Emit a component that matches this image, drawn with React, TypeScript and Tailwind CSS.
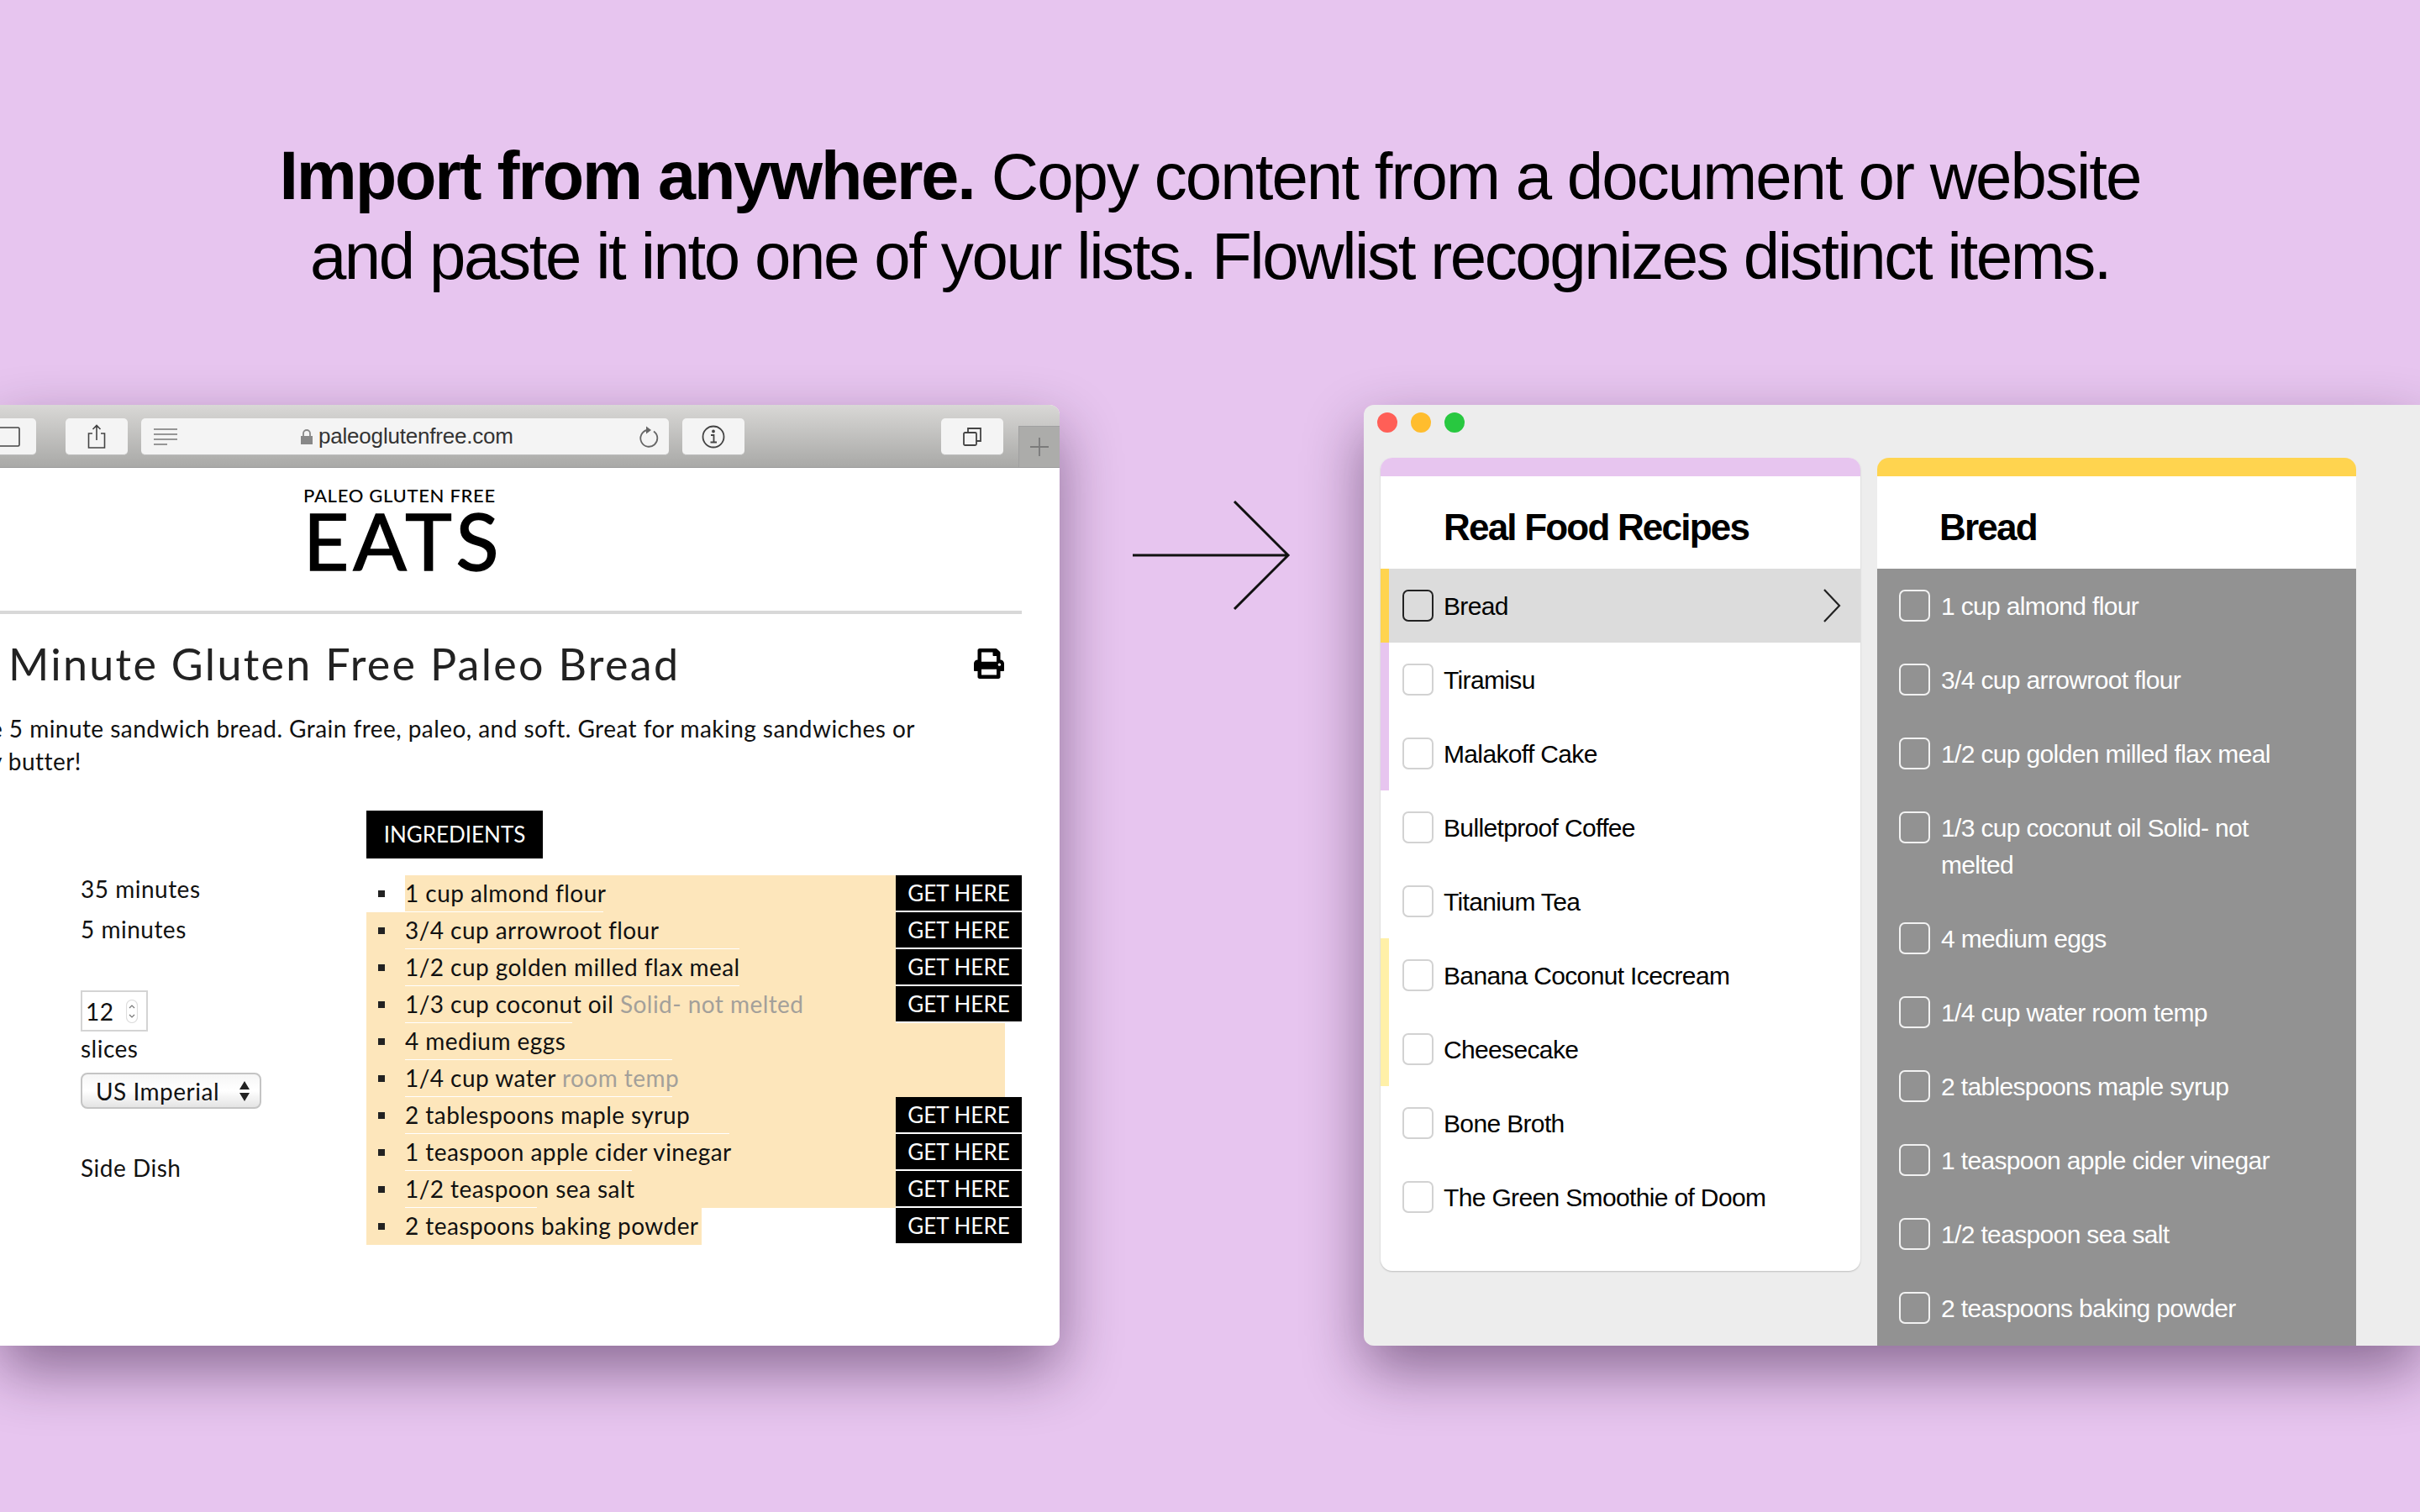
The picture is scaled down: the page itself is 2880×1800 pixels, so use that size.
import { FaPrint } from "react-icons/fa";

const ingredients = [
  { text: "1 cup almond flour", fill: "w-[630px]", line: "w-[236px]", buy: true, skipBullet: true },
  { text: "3/4 cup arrowroot flour", fill: "w-[630px]", line: "w-[398px]", buy: true },
  { text: "1/2 cup golden milled flax meal", fill: "w-[630px]", line: "w-[398px]", buy: true },
  { text: "1/3 cup coconut oil", note: "Solid- not melted", fill: "w-[630px]", line: "w-[199px]", buy: true },
  { text: "4 medium eggs", fill: "w-[760px]", line: "w-[318px]", buy: false },
  { text: "1/4 cup water", note: "room temp", fill: "w-[760px]", line: "w-[318px]", buy: false },
  { text: "2 tablespoons maple syrup", fill: "w-[630px]", line: "w-[386px]", buy: true },
  { text: "1 teaspoon apple cider vinegar", fill: "w-[630px]", line: "w-[270px]", buy: true },
  { text: "1/2 teaspoon sea salt", fill: "w-[630px]", line: "w-[157px]", buy: true },
  { text: "2 teaspoons baking powder", fill: "w-[399px]", line: "w-0", buy: true },
];

const recipes = [
  { name: "Bread", stripe: "bg-[#ffd44f]", active: true },
  { name: "Tiramisu", stripe: "bg-[#e7c5ef]" },
  { name: "Malakoff Cake", stripe: "bg-[#e7c5ef]" },
  { name: "Bulletproof Coffee", stripe: "bg-white" },
  { name: "Titanium Tea", stripe: "bg-white" },
  { name: "Banana Coconut Icecream", stripe: "bg-[#fff0a8]" },
  { name: "Cheesecake", stripe: "bg-[#fff0a8]" },
  { name: "Bone Broth", stripe: "bg-white" },
  { name: "The Green Smoothie of Doom", stripe: "bg-white" },
];

const breadItems = [
  "1 cup almond flour",
  "3/4 cup arrowroot flour",
  "1/2 cup golden milled flax meal",
  "1/3 cup coconut oil Solid- not melted",
  "4 medium eggs",
  "1/4 cup water room temp",
  "2 tablespoons maple syrup",
  "1 teaspoon apple cider vinegar",
  "1/2 teaspoon sea salt",
  "2 teaspoons baking powder",
];

function ToolButton({ className, children }: { className: string; children?: React.ReactNode }) {
  return (
    <div className={`h-[44px] shrink-0 rounded-[5px] bg-[#f4f4f4] border-b border-[#bdbdbd] flex items-center justify-center ${className}`}>
      {children}
    </div>
  );
}

function BrowserWindow() {
  return (
    <div className="w-[1261px] h-[1120px] shrink-0 rounded-r-[12px] bg-white overflow-hidden flex flex-col shadow-[0_30px_70px_rgba(40,10,50,0.48)] font-['Lato',sans-serif] text-[#111]">
      {/* Safari toolbar */}
      <div className="h-[75px] shrink-0 bg-gradient-to-b from-[#d9d8d6] to-[#a9a9a7] border-b border-[#999] flex items-start pt-[16px] relative">
        <ToolButton className="w-[80px] -ml-[37px]">
          <svg width="80" height="26" viewBox="0 0 80 26" fill="none" stroke="#444" strokeWidth="1.6">
            <rect x="20" y="2" width="40" height="22" rx="1.5" />
            <path d="M36 2v22" />
          </svg>
        </ToolButton>
        <ToolButton className="w-[74px] ml-[35px]">
          <svg width="24" height="30" viewBox="0 0 24 30" fill="none" stroke="#444" strokeWidth="1.6">
            <path d="M7 11H2.500v17h19V11H17M12 19V1.500M7.500 6 12 1.500 16.500 6" />
          </svg>
        </ToolButton>
        <ToolButton className="w-[628px] ml-[16px]">
          <div className="w-full flex items-center pl-[14px] pr-[12px]">
            <svg width="30" height="22" viewBox="0 0 30 22" stroke="#777" strokeWidth="1.6" className="shrink-0">
              <path d="M1 2h28M1 8h28M1 14h28M1 20h16" />
            </svg>
            <svg width="16" height="20" viewBox="0 0 16 20" fill="#888" className="shrink-0 ml-[145px]">
              <path d="M1 9h14v10H1z" />
              <path d="M4 9V6a4 4 0 0 1 8 0v3" fill="none" stroke="#888" strokeWidth="1.800" />
            </svg>
            <div className="ml-[6px] flex-1 text-[#333] text-[26px] font-['Liberation_Sans',sans-serif] tracking-[-0.2px]">paleoglutenfree.com</div>
            <svg width="24" height="26" viewBox="0 0 24 26" fill="none" stroke="#666" strokeWidth="1.800" className="shrink-0">
              <path d="M18 6.500a10 10 0 1 1-8-1.500" />
              <path d="M9 0.500l6 4.500-6 4.500z" fill="#666" stroke="none" />
            </svg>
          </div>
        </ToolButton>
        <ToolButton className="w-[74px] ml-[16px]">
          <svg width="30" height="30" viewBox="0 0 30 30" fill="none" stroke="#444" strokeWidth="1.800">
            <circle cx="15" cy="15" r="12.500" />
            <path d="M12 13h3.500v8M11.500 21.500h7.500" />
            <circle cx="15" cy="8.500" r="1" fill="#444" />
          </svg>
        </ToolButton>
        <ToolButton className="w-[74px] ml-[234px]">
          <svg width="26" height="26" viewBox="0 0 26 26" fill="none" stroke="#444" strokeWidth="1.800">
            <rect x="3" y="8" width="15" height="15" rx="1.500" />
            <path d="M8 8V3h15v15h-5" />
          </svg>
        </ToolButton>
        <div className="absolute right-0 bottom-0 w-[49px] h-[49px] bg-[#acacaa] border-l border-t border-[#a0a0a0] flex items-center justify-center">
          <svg width="24" height="24" viewBox="0 0 24 24" stroke="#7a7a7a" strokeWidth="1.800">
            <path d="M12 1v22M1 12h22" />
          </svg>
        </div>
      </div>

      {/* Recipe page */}
      <div className="flex-1 min-h-0">
        <div className="pl-[361px] pt-[21px]">
          <div className="h-[24px] leading-[24px] text-[22px] font-medium text-black tracking-[0.7px] whitespace-nowrap">PALEO GLUTEN FREE</div>
          <div className="h-[66px] leading-[66px] mt-[8px] text-[94px] font-normal text-black tracking-[5px] [-webkit-text-stroke:1.5px_black]">EATS</div>
        </div>
        <div className="w-[1216px] h-[4px] mt-[51px] bg-[#d8d8d8]" />
        <div className="w-[1216px] h-[60px] mt-[29px] flex items-center justify-between pl-[10px] pr-[20px]">
          <div className="text-[52px] leading-[60px] tracking-[2.3px] text-[#222] whitespace-nowrap">Minute Gluten Free Paleo Bread</div>
          <FaPrint className="w-[38px] h-[36px] text-black" />
        </div>
        <div className="mt-[28px] -ml-[12px] text-[28px] leading-[39px] tracking-[0.45px] whitespace-nowrap">
          <div>e 5 minute sandwich bread. Grain free, paleo, and soft. Great for making sandwiches or</div>
          <div>y butter!</div>
        </div>
        <div className="ml-[436px] mt-[39px] w-[210px] h-[57px] bg-black text-white text-[26px] flex items-center justify-center">INGREDIENTS</div>
        <div className="mt-[20px] flex">
          <div className="w-[436px] pl-[96px] text-[28px] tracking-[0.5px] leading-[32px] shrink-0">
            <div>35 minutes</div>
            <div className="mt-4">5 minutes</div>
            <div className="mt-[57px] w-[80px] h-[49px] border-2 border-[#d4d4d4] flex items-center justify-between pl-[4px] pr-[10px]">
              12
              <svg width="14" height="28" viewBox="0 0 14 28" fill="none" stroke="#777" strokeWidth="1.200">
                <rect x="0.500" y="0.500" width="13" height="27" rx="6.500" stroke="#ddd" />
                <path d="M4 10l3-3 3 3M4 18l3 3 3-3" />
              </svg>
            </div>
            <div className="mt-1">slices</div>
            <div className="mt-[13px] w-[215px] h-[43px] rounded-[8px] border-2 border-[#c4c4c4] bg-gradient-to-b from-[#f6f6f6] via-white to-[#e4e4e4] flex items-center justify-between pl-[16px] pr-[11px]">
              US Imperial
              <svg width="14" height="26" viewBox="0 0 14 26" fill="#222">
                <path d="M7 1l6 10H1zM7 25l6-10H1z" />
              </svg>
            </div>
            <div className="mt-[54px]">Side Dish</div>
          </div>
          <div className="flex flex-col">
            {ingredients.map((item) => (
              <div key={item.text} className="h-[44px] w-[780px] flex justify-between">
                <div className={`h-[44px] flex ${item.fill}`}>
                  <div className={`w-[46px] shrink-0 flex items-center pl-[14px] ${item.skipBullet ? "" : "bg-[#fde6bb]"}`}>
                    <div className="w-[8px] h-[8px] bg-[#222]" />
                  </div>
                  <div className="flex-1 flex flex-col bg-[#fde6bb]">
                    <div className="flex-1 text-[28px] tracking-[0.45px] leading-[43px] whitespace-nowrap text-[#111]">
                      {item.text}
                      {item.note && <span className="text-[#a3a09a]"> {item.note}</span>}
                    </div>
                    <div className={`h-px bg-white ${item.line}`} />
                  </div>
                </div>
                {item.buy && (
                  <div className="w-[150px] h-[42px] bg-black text-white text-[26px] flex items-center justify-center">GET HERE</div>
                )}
              </div>
            ))}
          </div>
        </div>
      </div>
    </div>
  );
}

function Checkbox({ tone }: { tone: "dark" | "light" | "white" }) {
  const color = tone === "dark" ? "border-[#222]" : tone === "white" ? "border-[#f2f2f2]" : "border-[#d2d2d2]";
  return <div className={`w-[37px] h-[38px] shrink-0 rounded-[7px] border-2 ${color}`} />;
}

function ListsWindow() {
  return (
    <div className="w-[1257px] h-[1120px] shrink-0 rounded-l-[12px] bg-[#ededed] overflow-hidden flex flex-col shadow-[0_30px_70px_rgba(40,10,50,0.48)] font-['Liberation_Sans',sans-serif] text-black">
      <div className="h-[63px] shrink-0 flex items-start gap-[16px] pl-[16px] pt-[9px]">
        <div className="w-[24px] h-[24px] rounded-full bg-[#ff5f57]" />
        <div className="w-[24px] h-[24px] rounded-full bg-[#ffbd2e]" />
        <div className="w-[24px] h-[24px] rounded-full bg-[#28c840]" />
      </div>
      <div className="flex-1 min-h-0 flex gap-[20px] pl-[20px]">
        {/* Lists column */}
        <div className="w-[571px] h-[968px] shrink-0 rounded-[14px] bg-white overflow-hidden shadow-[0_1px_2px_rgba(0,0,0,0.2)]">
          <div className="h-[22px] bg-[#e7c5ef]" />
          <div className="h-[110px] pl-[75px] flex items-center text-[44px] font-bold tracking-[-1.8px] pt-[12px]">Real Food Recipes</div>
          {recipes.map((r) => (
            <div key={r.name} className={`h-[88px] flex items-center ${r.active ? "bg-[#dcdcdc]" : ""}`}>
              <div className={`w-[10px] h-full shrink-0 ${r.stripe}`} />
              <div className="ml-[16px]">
                <Checkbox tone={r.active ? "dark" : "light"} />
              </div>
              <div className="ml-[12px] flex-1 text-[30px] tracking-[-0.65px]">{r.name}</div>
              {r.active && (
                <svg width="22" height="40" viewBox="0 0 22 40" fill="none" stroke="#222" strokeWidth="2.200" className="mr-[23px]">
                  <path d="M2 1l18 19L2 39" />
                </svg>
              )}
            </div>
          ))}
        </div>
        {/* Items column */}
        <div className="w-[570px] h-full shrink-0 rounded-t-[14px] overflow-hidden flex flex-col">
          <div className="h-[22px] shrink-0 bg-[#ffd44f]" />
          <div className="h-[110px] shrink-0 bg-white pl-[74px] flex items-center text-[44px] font-bold tracking-[-1.8px] pt-[12px]">Bread</div>
          <div className="flex-1 bg-[#929292] text-white">
            {breadItems.map((item) => (
              <div key={item} className="min-h-[88px] flex items-start pt-[25px] pb-[21px] pl-[26px]">
                <Checkbox tone="white" />
                <div className="ml-[13px] w-[440px] text-[30px] leading-[44px] tracking-[-0.65px] -mt-[2px]">{item}</div>
              </div>
            ))}
          </div>
        </div>
      </div>
    </div>
  );
}

export default function App() {
  return (
    <div className="w-[2880px] h-[1800px] overflow-hidden bg-[#e7c5ef]">
      <h1 className="pt-[161px] text-center text-[78px] leading-[96px] tracking-[-2.4px] text-black font-['Liberation_Sans',sans-serif] font-normal">
        <div className="h-[96px]">
          <span className="font-bold text-[81px] tracking-[-2.2px] mr-[1px]">Import from anywhere.</span>{" "}
          <span className="tracking-[-1.95px]">Copy content from a document or website</span>
        </div>
        <div className="h-[96px]">and paste it into one of your lists. Flowlist recognizes distinct items.</div>
      </h1>
      <div className="mt-[129px] flex items-start justify-between">
        <BrowserWindow />
        <svg width="190" height="130" viewBox="0 0 190 130" fill="none" stroke="#111" strokeWidth="3" className="mt-[114px]">
          <path d="M1 65h185M122 1l64 64-64 64" />
        </svg>
        <ListsWindow />
      </div>
    </div>
  );
}
